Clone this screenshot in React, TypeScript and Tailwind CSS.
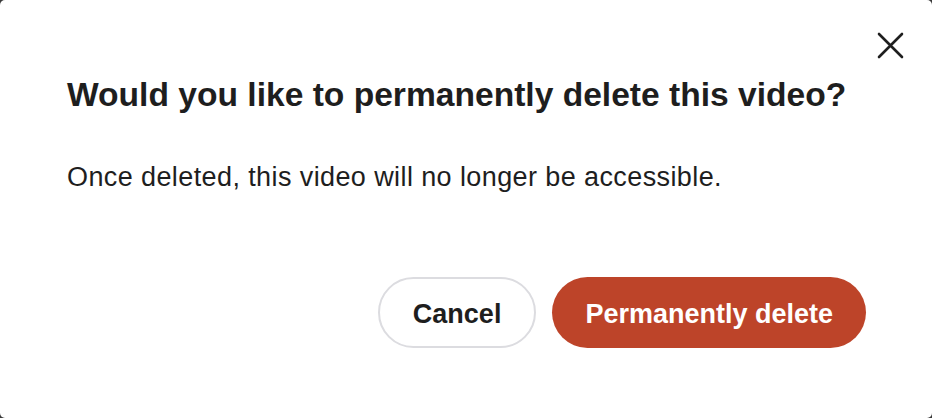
import React from "react";

export default function App() {
  return (
    <div className="w-[932px] h-[418px] bg-[#3a3a3a]" style={{ fontFamily: '"Liberation Sans", Arial, sans-serif' }}>
      <div className="relative w-full h-full bg-white rounded-[5px] pl-[67px] pr-[66px] pt-[75px] flex flex-col">
        <button className="absolute top-[32px] right-[28px] w-[27px] h-[27px] flex items-center justify-center" aria-label="Close">
          <svg width="27" height="27" viewBox="0 0 27 27" fill="none">
            <path d="M2 2L25 25M25 2L2 25" stroke="#1f1f1f" strokeWidth="2.6" strokeLinecap="round" />
          </svg>
        </button>
        <h1 className="text-[33.6px] leading-[40px] font-bold text-[#1e1e1e] m-0">
          Would you like to permanently delete this video?
        </h1>
        <p className="mt-[44px] text-[27px] leading-[36px] tracking-[0.4px] text-[#1e1e1e]">
          Once deleted, this video will no longer be accessible.
        </p>
        <div className="mt-[82px] flex justify-end gap-[16px]">
          <button className="h-[71px] px-[33px] pt-[3px] leading-none rounded-full border-2 border-[#dcdce0] bg-white text-[27px] font-bold text-[#1e1e1e]">
            Cancel
          </button>
          <button className="h-[71px] px-[33px] pt-[3px] leading-none rounded-full bg-[#bd4429] text-[27px] font-bold text-white">
            Permanently delete
          </button>
        </div>
      </div>
    </div>
  );
}
